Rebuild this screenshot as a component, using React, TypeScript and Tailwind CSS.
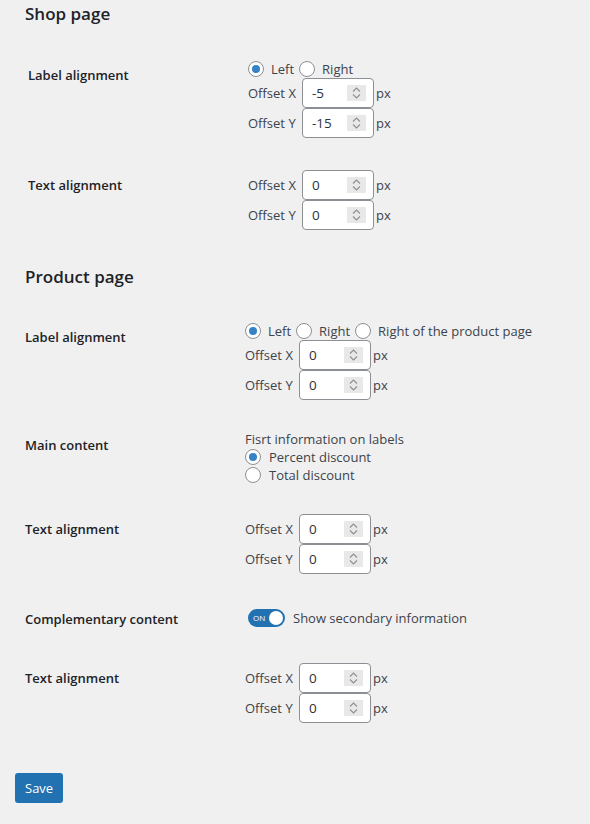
import type { ReactNode } from 'react'

function Radio({ checked = false }: { checked?: boolean }) {
  return (
    <span className="inline-flex h-4 w-4 shrink-0 items-center justify-center rounded-full border border-[#8c8f94] bg-white">
      {checked && <span className="h-2 w-2 rounded-full bg-[#3582c4]" />}
    </span>
  )
}

function Spinner() {
  return (
    <span className="flex h-4 w-[19px] flex-col items-center justify-center gap-[2px] bg-[#e8e8e9]">
      <svg width="9" height="5" viewBox="0 0 9 5" fill="none" stroke="#8c8f94" strokeWidth="1.1">
        <path d="M1 4.5 L4.5 1 L8 4.5" />
      </svg>
      <svg width="9" height="5" viewBox="0 0 9 5" fill="none" stroke="#8c8f94" strokeWidth="1.1">
        <path d="M1 0.5 L4.5 4 L8 0.5" />
      </svg>
    </span>
  )
}

function OffsetInput({ axis, value }: { axis: string; value: string }) {
  return (
    <div className="flex h-[30px] items-center">
      <span className="w-[54px] shrink-0">Offset {axis}</span>
      <div className="flex h-[30px] w-[72px] items-center justify-between rounded-[4px] border border-[#8c8f94] bg-white pl-[9px] pr-[7px] text-[13.5px] text-[#2c3338]">
        <span>{value}</span>
        <Spinner />
      </div>
      <span className="ml-[2px]">px</span>
    </div>
  )
}

function Row({ label, children }: { label: string; children: ReactNode }) {
  return (
    <div className="flex">
      <div className="w-[220px] shrink-0 pb-[20px] pt-[21px] text-[13px] font-semibold leading-[18px] text-[#1d2327]">
        {label}
      </div>
      <div className="py-[15px]">{children}</div>
    </div>
  )
}

function Offsets({ x, y }: { x: string; y: string }) {
  return (
    <>
      <OffsetInput axis="X" value={x} />
      <OffsetInput axis="Y" value={y} />
    </>
  )
}

export default function App() {
  return (
    <div className="min-h-[824px] bg-[#f0f0f1] pl-[15px] pt-[2px] font-['Open_Sans','Noto_Sans',sans-serif] text-[13px] leading-[18px] text-[#3c434a]">
      <h2 className="ml-[10px] text-[17px] font-semibold leading-[24px] text-[#1d2327]">Shop page</h2>

      <div className="ml-[13px] mt-[19px]">
        <Row label="Label alignment">
          <div className="flex h-[18px] items-center">
            <Radio checked />
            <span className="ml-[7px] mr-[5px]">Left</span>
            <Radio />
            <span className="ml-[7px]">Right</span>
          </div>
          <Offsets x="-5" y="-15" />
          <div className="h-[2px]" />
        </Row>
        <Row label="Text alignment">
          <Offsets x="0" y="0" />
        </Row>
      </div>

      <h2 className="ml-[10px] mt-[20px] text-[17px] font-semibold leading-[24px] text-[#1d2327]">Product page</h2>

      <div className="ml-[10px] mt-[18px]">
        <Row label="Label alignment">
          <div className="flex h-[18px] items-center">
            <Radio checked />
            <span className="ml-[7px] mr-[5px]">Left</span>
            <Radio />
            <span className="ml-[7px] mr-[5px]">Right</span>
            <Radio />
            <span className="ml-[7px]">Right of the product page</span>
          </div>
          <Offsets x="0" y="0" />
        </Row>
        <Row label="Main content">
          <div>Fisrt information on labels</div>
          <div className="flex h-[18px] items-center">
            <Radio checked />
            <span className="ml-[8px]">Percent discount</span>
          </div>
          <div className="flex h-[18px] items-center">
            <Radio />
            <span className="ml-[8px]">Total discount</span>
          </div>
        </Row>
        <Row label="Text alignment">
          <Offsets x="0" y="0" />
        </Row>
        <Row label="Complementary content">
          <div className="flex h-[28px] items-center">
            <span className="ml-[3px] flex h-[18px] w-[37px] items-center justify-between rounded-full bg-[#2271b1] pl-[5px] pr-[2px]">
              <span className="text-[8px] leading-none text-white">ON</span>
              <span className="h-[14px] w-[14px] rounded-full bg-white" />
            </span>
            <span className="ml-[8px]">Show secondary information</span>
          </div>
        </Row>
        <Row label="Text alignment">
          <Offsets x="0" y="0" />
        </Row>
      </div>

      <button className="mt-[35px] h-[30px] rounded-[3px] bg-[#2271b1] px-[10px] text-[13px] leading-[28px] text-white">
        Save
      </button>
    </div>
  )
}
